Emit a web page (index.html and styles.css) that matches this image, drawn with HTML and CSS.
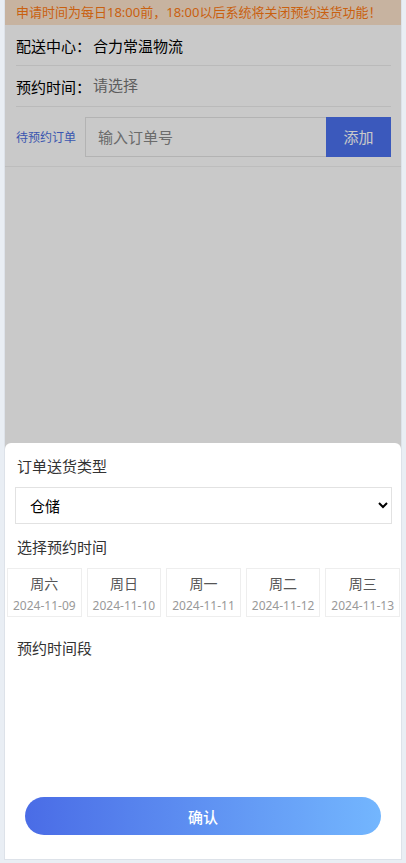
FILE: index.html
```html
<!DOCTYPE html>
<html lang="zh-CN">
<head>
    <meta charset="UTF-8">
    <meta name="viewport" content="width=device-width, initial-scale=1.0">
    <title>预约送货</title>
    <link rel="stylesheet" href="styles.css">
</head>
<body>
    <div class="page">
        <div class="notice">申请时间为每日18:00前，18:00以后系统将关闭预约送货功能！</div>
        <div class="form">
            <div class="row">
                <span class="label">配送中心：</span>
                <span class="value">合力常温物流</span>
            </div>
            <div class="row">
                <span class="label">预约时间：</span>
                <span class="value muted">请选择</span>
            </div>
            <div class="row order-row">
                <span class="link">待预约订单</span>
                <input class="order-input" type="text" placeholder="输入订单号">
                <button class="add-btn">添加</button>
            </div>
        </div>

        <!-- 遮罩层 -->
        <div class="mask"></div>

        <!-- 底部弹出层 -->
        <div class="sheet">
            <div class="sheet-title">订单送货类型</div>
            <select class="type-select">
                <option>仓储</option>
                <option>直送</option>
            </select>
            <div class="sheet-title">选择预约时间</div>
            <div class="dates">
                <div class="date-card"><span class="day">周六</span><span class="date">2024-11-09</span></div>
                <div class="date-card"><span class="day">周日</span><span class="date">2024-11-10</span></div>
                <div class="date-card"><span class="day">周一</span><span class="date">2024-11-11</span></div>
                <div class="date-card"><span class="day">周二</span><span class="date">2024-11-12</span></div>
                <div class="date-card"><span class="day">周三</span><span class="date">2024-11-13</span></div>
            </div>
            <div class="sheet-title">预约时间段</div>
            <button class="confirm-btn">确认</button>
        </div>
    </div>
</body>
</html>
```

FILE: styles.css
```css
* {
    margin: 0;
    padding: 0;
    box-sizing: border-box;
}

body {
    font-family: "Noto Sans", "Noto Sans CJK SC", sans-serif;
    background: #e9eef4;
    color: #333;
    padding: 0 4px 3px;
}

.page {
    position: relative;
    height: 860px;
    background: #fff;
    border: 1px solid #dde2e9;
    border-top: none;
    overflow: hidden;
}

.notice {
    height: 25px;
    line-height: 25px;
    padding-left: 11px;
    font-size: 13px;
    color: #ff7a14;
    background: #fde4cc;
    white-space: nowrap;
}

.form {
    padding: 0 10px 0 11px;
    border-bottom: 1px solid #f0f0f0;
}

.row {
    display: flex;
    align-items: center;
    height: 41px;
    border-bottom: 1px solid #ececec;
    font-size: 15px;
}

.label {
    color: #000;
    width: 77px;
}

.value {
    color: #000;
}

.value.muted {
    color: #777;
    margin-top: -3px;
}

.order-row {
    height: 59px;
    border-bottom: none;
}

.link {
    font-size: 12px;
    color: #4b6ee0;
    width: 69px;
}

.order-input {
    flex: 1;
    height: 40px;
    border: 1px solid #e4e4e4;
    border-right: none;
    padding-left: 12px;
    font-family: inherit;
    font-size: 15px;
    outline: none;
}

.order-input::placeholder {
    color: #888;
}

.add-btn {
    width: 65px;
    height: 40px;
    border: none;
    background: #4c72ef;
    color: #fff;
    font-family: inherit;
    font-size: 15px;
}

.mask {
    position: absolute;
    top: 0;
    left: 0;
    right: 0;
    bottom: 0;
    background: rgba(0, 0, 0, 0.21);
}

.sheet {
    position: absolute;
    top: 443px;
    left: 0;
    right: 0;
    bottom: 0;
    background: #fff;
    border-radius: 6px 6px 0 0;
    display: flex;
    flex-direction: column;
    padding: 0 0 24px;
}

.sheet-title {
    font-size: 15px;
    color: #333;
    padding: 12px 12px 0;
    height: 44px;
}

.type-select {
    margin: 0 9px 0 10px;
    height: 37px;
    border: 1px solid #e2e2e2;
    border-radius: 0;
    background: #fff;
    padding-left: 10px;
    font-family: inherit;
    font-size: 15px;
    color: #000;
    outline: none;
}

.dates {
    display: grid;
    grid-template-columns: repeat(5, 1fr);
    gap: 5px;
    padding: 0 1px 0 2px;
    margin-bottom: 8px;
}

.date-card {
    height: 49px;
    border: 1px solid #eee;
    display: flex;
    flex-direction: column;
    align-items: center;
    justify-content: center;
    gap: 4px;
    padding-top: 1px;
}

.day {
    font-size: 14px;
    color: #555;
}

.date {
    font-size: 12px;
    color: #999;
}

.confirm-btn {
    margin: auto 20px 0;
    height: 38px;
    border: none;
    border-radius: 19px;
    background: linear-gradient(90deg, #4a6ce6, #73b6fe);
    color: #fff;
    font-family: inherit;
    font-size: 15px;
    font-weight: 500;
}
```
